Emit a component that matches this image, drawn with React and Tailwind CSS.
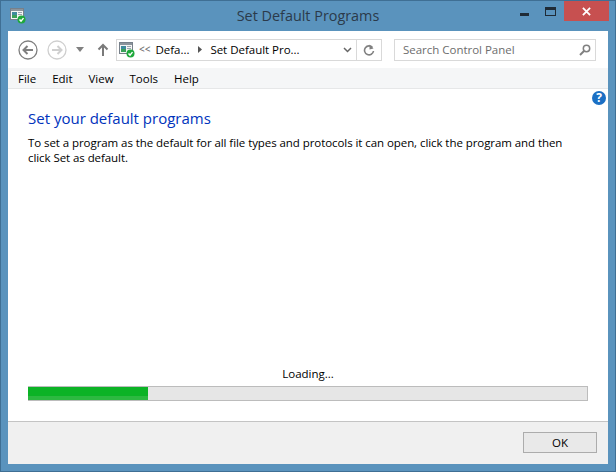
import React from "react";

const font = { fontFamily: '"Open Sans", "Noto Sans", sans-serif' };

const ProgramIcon = ({ className }) => (
  <svg viewBox="0 0 16 16" width="16" height="16" className={className}>
    <rect x="0.5" y="0.5" width="13" height="11" fill="#f4f4f4" stroke="#77808a" />
    <rect x="1" y="1" width="12" height="2" fill="#8b949c" />
    <rect x="2" y="4" width="5" height="6" fill="#3e8a9c" />
    <rect x="2" y="7" width="5" height="3" fill="#3aa05a" />
    <rect x="8" y="4" width="4" height="1" fill="#9aa5ae" />
    <rect x="8" y="6" width="4" height="1" fill="#9aa5ae" />
    <circle cx="11.5" cy="11.5" r="4" fill="#1fa83c" />
    <path d="M9.5 11.5l1.5 1.6 2.5-3" fill="none" stroke="#fff" strokeWidth="1.4" />
  </svg>
);

const NavCircle = ({ color, dir }) => (
  <svg viewBox="0 0 20 20" width="20" height="20">
    <circle cx="10" cy="10" r="9" fill="#fff" stroke={color} strokeWidth="1.3" />
    {dir === "left" ? (
      <path d="M15 10H6M9.5 6L5.5 10l4 4" fill="none" stroke={color} strokeWidth="2" />
    ) : (
      <path d="M5 10h9M10.5 6l4 4-4 4" fill="none" stroke={color} strokeWidth="2" />
    )}
  </svg>
);

const App = () => {
  return (
    <div
      style={font}
      className="w-[616px] h-[472px] flex flex-col bg-[#5a93bd] border border-[#3f6f94] overflow-hidden text-[11.5px] tracking-[-0.02px] text-black"
    >
      {/* title bar */}
      <div className="h-[30px] shrink-0 grid grid-cols-[1fr_auto_1fr] items-start">
        <ProgramIcon className="ml-[9px] mt-[7px]" />
        <div className="text-center text-[14.4px] tracking-normal leading-[30px] text-[#2b3a4a]">
          Set Default Programs
        </div>
        <div className="flex items-start justify-end mr-[6px]">
          <div className="w-[26px] h-[20px] flex items-end justify-center pb-[5px]">
            <div className="w-[9px] h-[3px] bg-[#1f2b36]" />
          </div>
          <div className="w-[27px] h-[20px] flex items-center justify-center">
            <div className="w-[11px] h-[9px] border border-t-[3px] border-[#1f2b36]" />
          </div>
          <div className="w-[45px] h-[20px] bg-[#c75050] flex items-center justify-center">
            <svg viewBox="0 0 10 10" width="9" height="9">
              <path d="M1 1l8 8M9 1l-8 8" stroke="#fff" strokeWidth="2" />
            </svg>
          </div>
        </div>
      </div>

      {/* window body */}
      <div className="flex-1 mx-[7px] mb-[7px] flex flex-col bg-white min-h-0">
        {/* nav toolbar */}
        <div className="h-[37px] shrink-0 flex items-center pl-[10px] pr-[12px]">
          <NavCircle color="#7f7f7f" dir="left" />
          <div className="ml-[9px]">
            <NavCircle color="#cfcfcf" dir="right" />
          </div>
          <svg viewBox="0 0 8 5" width="8" height="5" className="ml-[9px]">
            <path d="M0 0h8L4 5z" fill="#808080" />
          </svg>
          <svg viewBox="0 0 12 14" width="12" height="14" className="ml-[13px]">
            <path d="M6 13V2M1.5 6.5L6 2l4.500 4.500" fill="none" stroke="#7a7a7a" strokeWidth="2" />
          </svg>
          <div className="ml-[7px] w-[266px] h-[22px] border border-[#d9d9d9] flex items-center">
            <ProgramIcon className="ml-[2px] shrink-0" />
            <span className="ml-[4px] text-[#707070] text-[10px] font-semibold">&lt;&lt;</span>
            <span className="ml-[5px]">Defa...</span>
            <svg viewBox="0 0 4 7" width="4" height="7" className="ml-[9px]">
              <path d="M0 0l4 3.500L0 7z" fill="#555" />
            </svg>
            <span className="ml-[8px]">Set Default Pro...</span>
            <svg viewBox="0 0 9 6" width="9" height="6" className="ml-auto mr-[4px]">
              <path d="M1 1l3.500 3.500L8 1" fill="none" stroke="#666" strokeWidth="1.500" />
            </svg>
            <div className="w-[25px] h-full border-l border-[#d9d9d9] flex items-center justify-center shrink-0">
              <svg viewBox="0 0 12 12" width="12" height="12">
                <path d="M9.500 3.500A4.500 4.500 0 1 0 10.500 7" fill="none" stroke="#808080" strokeWidth="1.600" />
                <path d="M6.500 0.500v5l4-1z" fill="#808080" />
              </svg>
            </div>
          </div>
          <div className="ml-auto w-[202px] h-[22px] border border-[#d9d9d9] flex items-center pl-[8px] pr-[4px] text-[#6d6d6d]">
            <span>Search Control Panel</span>
            <svg viewBox="0 0 12 12" width="12" height="12" className="ml-auto">
              <circle cx="7.500" cy="4.500" r="3.200" fill="none" stroke="#808080" strokeWidth="1.500" />
              <path d="M5 7l-4 4" stroke="#808080" strokeWidth="2" />
            </svg>
          </div>
        </div>

        {/* menu bar */}
        <div className="h-[21px] shrink-0 bg-[#f5f6f7] border-b border-[#e6e7e8] flex items-center pl-[10px] pt-[2px] gap-[16px]">
          <span>File</span>
          <span>Edit</span>
          <span>View</span>
          <span>Tools</span>
          <span>Help</span>
        </div>

        {/* content */}
        <div className="flex-1 flex flex-col px-[20px] relative min-h-0">
          <div className="absolute right-[2px] top-[2px] w-[14px] h-[14px] rounded-full bg-[#1a6fc4] text-white text-[12px] font-bold leading-[14px] text-center">
            ?
          </div>
          <h1 className="mt-[19px] text-[15px] tracking-normal leading-[21px] text-[#0033bc]">Set your default programs</h1>
          <p className="mt-[6px] leading-[15px] w-[550px] tracking-[-0.07px]">
            To set a program as the default for all file types and protocols it can open, click the program and then click Set as default.
          </p>
          <div className="mt-auto mb-[4px] text-center leading-[16px]">Loading...</div>
          <div className="mb-[20px] h-[15px] bg-[#e6e6e6] border-y border-r border-[#bcbcbc] flex">
            <div className="w-[120px] h-full bg-[#0bb325] border-b-[4px] border-[#2cb940]" />
          </div>
        </div>

        {/* footer */}
        <div className="h-[43px] shrink-0 bg-[#f0f0f0] border-t border-[#c4c4c4] flex items-start justify-end pt-[10px] pr-[11px]">
          <button className="w-[74px] h-[21px] bg-[#e9e9e9] border border-[#acacac] leading-[19px]">OK</button>
        </div>
      </div>
    </div>
  );
};

export default App;
